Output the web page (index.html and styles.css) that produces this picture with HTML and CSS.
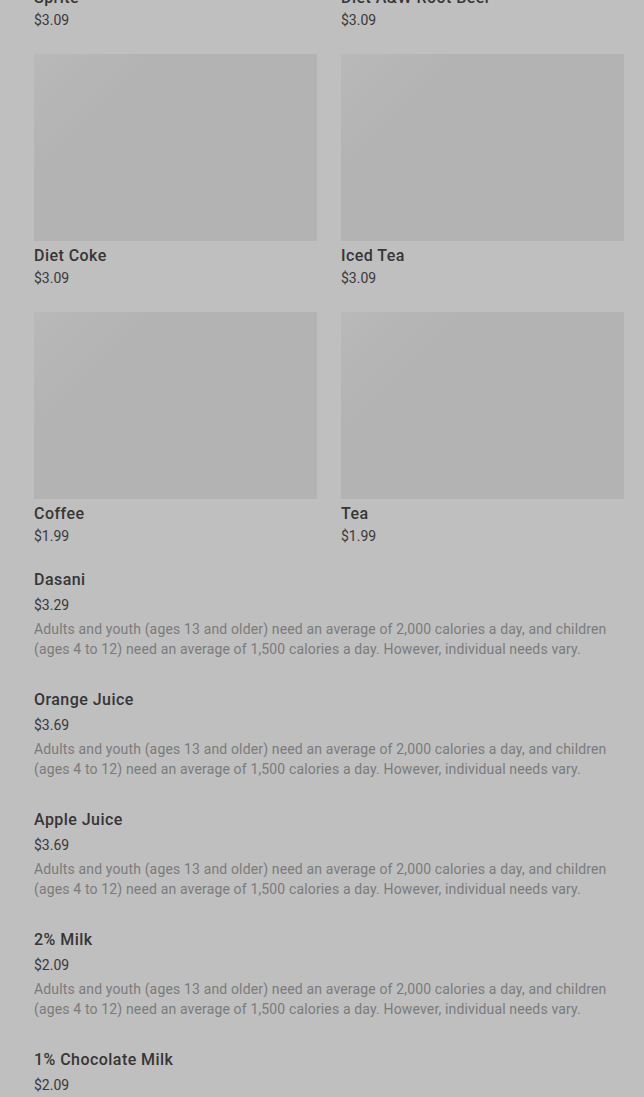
FILE: index.html
```html
<!DOCTYPE html>
<html>
<head>
<meta charset="utf-8">
<link rel="stylesheet" href="styles.css">
</head>
<body>
<main class="page">
  <section class="grid">
    <div class="card"><div class="thumb"></div><div class="title">Sprite</div><div class="price">$3.09</div></div>
    <div class="card"><div class="thumb"></div><div class="title">Diet A&amp;W Root Beer</div><div class="price">$3.09</div></div>
    <div class="card"><div class="thumb"></div><div class="title">Diet Coke</div><div class="price">$3.09</div></div>
    <div class="card"><div class="thumb"></div><div class="title">Iced Tea</div><div class="price">$3.09</div></div>
    <div class="card"><div class="thumb"></div><div class="title">Coffee</div><div class="price">$1.99</div></div>
    <div class="card"><div class="thumb"></div><div class="title">Tea</div><div class="price">$1.99</div></div>
  </section>
  <section class="list">
    <div class="item"><div class="title">Dasani</div><div class="price">$3.29</div><p class="desc">Adults and youth (ages 13 and older) need an average of 2,000 calories a day, and children (ages 4 to 12) need an average of 1,500 calories a day. However, individual needs vary.</p></div>
    <div class="item"><div class="title">Orange Juice</div><div class="price">$3.69</div><p class="desc">Adults and youth (ages 13 and older) need an average of 2,000 calories a day, and children (ages 4 to 12) need an average of 1,500 calories a day. However, individual needs vary.</p></div>
    <div class="item"><div class="title">Apple Juice</div><div class="price">$3.69</div><p class="desc">Adults and youth (ages 13 and older) need an average of 2,000 calories a day, and children (ages 4 to 12) need an average of 1,500 calories a day. However, individual needs vary.</p></div>
    <div class="item"><div class="title">2% Milk</div><div class="price">$2.09</div><p class="desc">Adults and youth (ages 13 and older) need an average of 2,000 calories a day, and children (ages 4 to 12) need an average of 1,500 calories a day. However, individual needs vary.</p></div>
    <div class="item"><div class="title">1% Chocolate Milk</div><div class="price">$2.09</div><p class="desc">Adults and youth (ages 13 and older) need an average of 2,000 calories a day, and children (ages 4 to 12) need an average of 1,500 calories a day. However, individual needs vary.</p></div>
  </section>
</main>
</body>
</html>
```
FILE: styles.css
```css
html, body {
  margin: 0;
  background: #bfbfbf;
  overflow: hidden;
}
body {
  font-family: Roboto, "Liberation Sans", sans-serif;
  color: #333;
}
.page {
  padding: 0 20px 0 34px;
}
.grid {
  display: grid;
  grid-template-columns: 1fr 1fr;
  column-gap: 24px;
  row-gap: 24px;
  margin-top: -204px;
}
.thumb {
  height: 187px;
  background: linear-gradient(135deg, #b9b9b9 0%, #b3b3b3 25%, #b3b3b3 100%);
}
.title {
  font-size: 16px;
  line-height: 20px;
  font-weight: 500;
  letter-spacing: 0.45px;
  color: #363636;
}
.card .title {
  margin-top: 5px;
}
.price {
  font-size: 14px;
  line-height: 20px;
  color: #3a3a3a;
  margin-top: 2px;
}
.list {
  margin-top: 24px;
  display: flex;
  flex-direction: column;
  gap: 31px;
}
.item .price {
  margin-top: 5px;
}
.desc {
  margin: 4px 0 0;
  font-size: 14px;
  line-height: 20px;
  letter-spacing: 0.15px;
  color: #7b7b7b;
  padding-right: 10px;
}
```
